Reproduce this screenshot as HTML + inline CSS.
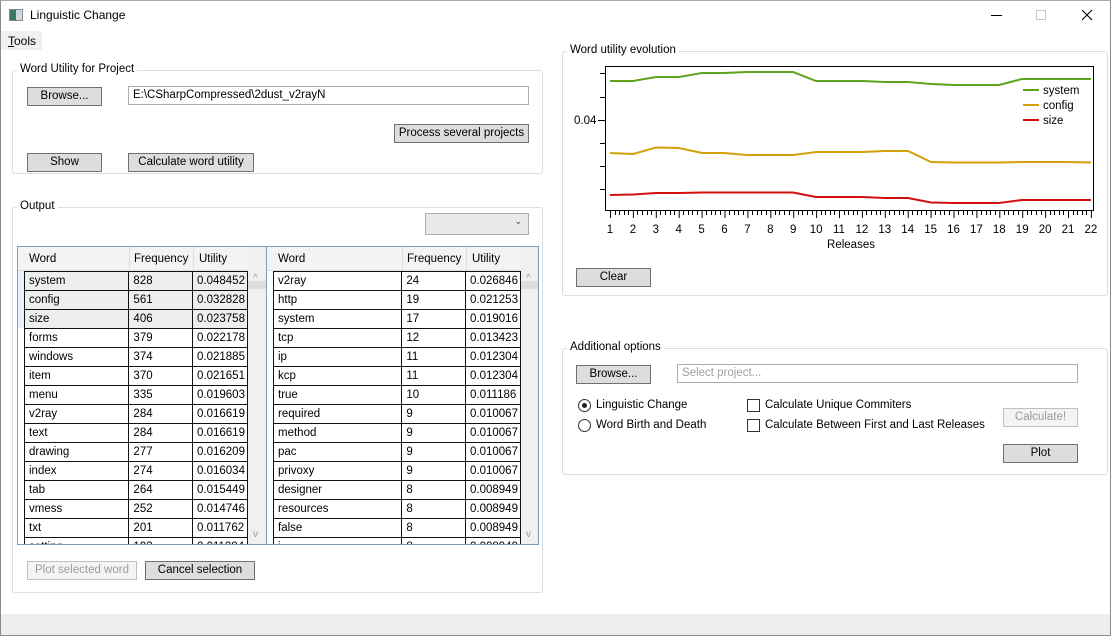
<!DOCTYPE html>
<html><head><meta charset="utf-8"><style>
*{box-sizing:border-box;margin:0;padding:0}
body{width:1111px;height:636px;overflow:hidden;background:#fff;font-family:"Liberation Sans",sans-serif;font-size:11.5px;color:#000;position:relative}
.a{position:absolute}
.btn{position:absolute;background:#dddddd;border:1px solid #707070;text-align:center;line-height:17px;font-size:11.5px}
.dis{color:#9a9a9a;border-color:#bfbfbf;background:#f4f4f4}
.grp{position:absolute;border:1px solid #d5dfe5;border-radius:3px}
.gt{position:absolute;background:#fff;padding:0 3px;top:-8px;left:4px;font-size:11.5px}
.tb{position:absolute;border:1px solid #abadb3;background:#fff;padding-left:4px;line-height:16px}
table{border-collapse:collapse;position:absolute;font-size:11.5px}
td{border:1px solid #111;height:19px;padding:0 0 0 4px;white-space:nowrap;overflow:hidden}
</style></head><body>
<div class="a" style="left:0;top:0;width:1111px;height:636px;border:1px solid #8a8a8a;border-top-color:#aaa"></div>
<div class="a" style="left:9px;top:9px;width:14px;height:12px;border:1px solid #888;background:linear-gradient(90deg,#3b7a5c 0 50%,#cfd8e0 50%)"></div>
<div class="a" style="left:30px;top:8px;font-size:12px">Linguistic Change</div>
<div class="a" style="left:991px;top:15px;width:11px;height:1px;background:#000"></div>
<div class="a" style="left:1036px;top:10px;width:10px;height:10px;border:1px solid #c8c8c8"></div>
<svg class="a" style="left:1081px;top:9px" width="12" height="12"><path d="M1 1L11 11M11 1L1 11" stroke="#000" stroke-width="1.1"/></svg>
<div class="a" style="left:1px;top:31px;width:41px;height:19px;background:#f0f0f0"></div>
<div class="a" style="left:8px;top:34px;font-size:12px"><u>T</u>ools</div>
<div class="grp" style="left:12px;top:70px;width:531px;height:104px"><div class="gt">Word Utility for Project</div></div>
<div class="btn" style="left:27px;top:87px;width:75px;height:19px">Browse...</div>
<div class="tb" style="left:128px;top:86px;width:401px;height:19px">E:\CSharpCompressed\2dust_v2rayN</div>
<div class="btn" style="left:394px;top:124px;width:135px;height:19px">Process several projects</div>
<div class="btn" style="left:27px;top:153px;width:75px;height:19px">Show</div>
<div class="btn" style="left:128px;top:153px;width:126px;height:19px">Calculate word utility</div>
<div class="grp" style="left:12px;top:207px;width:531px;height:386px"><div class="gt">Output</div></div>
<div class="a" style="left:425px;top:213px;width:104px;height:22px;border:1px solid #acacac;background:#eaeaea"><span class="a" style="right:6px;top:2px;font-size:9px;color:#444">&#8964;</span></div>
<div class="a" style="left:17px;top:246px;width:522px;height:299px;border:1px solid #7b9ebd;overflow:hidden;background:#fff">
<div class="a" style="left:0;top:0;width:248px;height:24px;background:#f3f3f3;border-bottom:1px solid #ddd"></div>
<div class="a" style="left:11px;top:6px">Word</div><div class="a" style="left:116px;top:6px">Frequency</div><div class="a" style="left:181px;top:6px">Utility</div>
<div class="a" style="left:111px;top:0;width:1px;height:24px;background:#ddd"></div>
<div class="a" style="left:175px;top:0;width:1px;height:24px;background:#ddd"></div>
<div class="a" style="left:230px;top:0;width:18px;height:298px;background:#f0f0f0"></div>
<div class="a" style="left:230px;top:34px;width:18px;height:8px;background:#ddd"></div>
<div class="a" style="left:235px;top:26px;color:#999;font-size:10px">^</div>
<div class="a" style="left:235px;top:282px;color:#999;font-size:10px">v</div>
<div class="a" style="left:248px;top:0;width:1px;height:298px;background:#7b9ebd"></div>
<div class="a" style="left:249px;top:0;width:272px;height:24px;background:#f3f3f3;border-bottom:1px solid #ddd"></div>
<div class="a" style="left:260px;top:6px">Word</div><div class="a" style="left:389px;top:6px">Frequency</div><div class="a" style="left:454px;top:6px">Utility</div>
<div class="a" style="left:384px;top:0;width:1px;height:24px;background:#ddd"></div>
<div class="a" style="left:448px;top:0;width:1px;height:24px;background:#ddd"></div>
<div class="a" style="left:503px;top:0;width:18px;height:298px;background:#f0f0f0"></div>
<div class="a" style="left:503px;top:34px;width:18px;height:8px;background:#ddd"></div>
<div class="a" style="left:508px;top:26px;color:#999;font-size:10px">^</div>
<div class="a" style="left:508px;top:282px;color:#999;font-size:10px">v</div>
<div class="a" style="left:0;top:24px;width:6px;height:57px;background:#e8f1fa"></div>
<table style="left:6px;top:24px;width:224px">
<colgroup><col style="width:105px"><col style="width:64px"><col style="width:55px"></colgroup>
<tr style="background:#eee"><td>system</td><td>828</td><td>0.048452</td></tr>
<tr style="background:#eee"><td>config</td><td>561</td><td>0.032828</td></tr>
<tr style="background:#eee"><td>size</td><td>406</td><td>0.023758</td></tr>
<tr><td>forms</td><td>379</td><td>0.022178</td></tr>
<tr><td>windows</td><td>374</td><td>0.021885</td></tr>
<tr><td>item</td><td>370</td><td>0.021651</td></tr>
<tr><td>menu</td><td>335</td><td>0.019603</td></tr>
<tr><td>v2ray</td><td>284</td><td>0.016619</td></tr>
<tr><td>text</td><td>284</td><td>0.016619</td></tr>
<tr><td>drawing</td><td>277</td><td>0.016209</td></tr>
<tr><td>index</td><td>274</td><td>0.016034</td></tr>
<tr><td>tab</td><td>264</td><td>0.015449</td></tr>
<tr><td>vmess</td><td>252</td><td>0.014746</td></tr>
<tr><td>txt</td><td>201</td><td>0.011762</td></tr>
<tr><td>setting</td><td>193</td><td>0.011294</td></tr>
</table>
<table style="left:255px;top:24px;width:248px">
<colgroup><col style="width:129px"><col style="width:64px"><col style="width:55px"></colgroup>
<tr><td>v2ray</td><td>24</td><td>0.026846</td></tr>
<tr><td>http</td><td>19</td><td>0.021253</td></tr>
<tr><td>system</td><td>17</td><td>0.019016</td></tr>
<tr><td>tcp</td><td>12</td><td>0.013423</td></tr>
<tr><td>ip</td><td>11</td><td>0.012304</td></tr>
<tr><td>kcp</td><td>11</td><td>0.012304</td></tr>
<tr><td>true</td><td>10</td><td>0.011186</td></tr>
<tr><td>required</td><td>9</td><td>0.010067</td></tr>
<tr><td>method</td><td>9</td><td>0.010067</td></tr>
<tr><td>pac</td><td>9</td><td>0.010067</td></tr>
<tr><td>privoxy</td><td>9</td><td>0.010067</td></tr>
<tr><td>designer</td><td>8</td><td>0.008949</td></tr>
<tr><td>resources</td><td>8</td><td>0.008949</td></tr>
<tr><td>false</td><td>8</td><td>0.008949</td></tr>
<tr><td>i</td><td>8</td><td>0.008949</td></tr>
</table>
</div>
<div class="btn dis" style="left:27px;top:561px;width:110px;height:19px">Plot selected word</div>
<div class="btn" style="left:145px;top:561px;width:110px;height:19px">Cancel selection</div>
<div class="grp" style="left:562px;top:51px;width:546px;height:245px"><div class="gt">Word utility evolution</div></div>
<svg class="a" style="left:0;top:0" width="1111" height="300">
<rect x="605.5" y="66.5" width="488" height="144" fill="none" stroke="#000" stroke-width="1"/>
<g stroke="#000">
<line x1="600" y1="73.5" x2="605" y2="73.5"/><line x1="600" y1="97.5" x2="605" y2="97.5"/><line x1="598" y1="120.5" x2="605" y2="120.5"/>
<line x1="600" y1="143.5" x2="605" y2="143.5"/><line x1="600" y1="166.5" x2="605" y2="166.5"/><line x1="600" y1="189.5" x2="605" y2="189.5"/>
</g>
<g id="ticks" stroke="#000"></g>
<polyline fill="none" stroke="#5ba41c" stroke-width="2" points="610,81 633,81 656,77 679,77 702,73 724,73 747,72 770,72 793,72 816,81 839,81 862,81 885,82 908,82 931,84 954,85 976,85 999,85 1022,79 1045,79 1068,79 1091,79"/>
<polyline fill="none" stroke="#d4a00c" stroke-width="2" points="610,153 633,154 656,147.5 679,148 702,153 724,153 747,155 770,155 793,155 816,152 839,152 862,152 885,151 908,151 931,162 954,162.5 976,162.5 999,162.5 1022,162 1045,162 1068,162 1091,162.5"/>
<polyline fill="none" stroke="#d40f0f" stroke-width="2" points="610,195 633,194.5 656,193 679,193 702,192.5 724,192.5 747,192.5 770,192.5 793,192.5 816,197 839,197 862,197 885,198 908,198 931,202.5 954,203 976,203 999,203 1022,200 1045,200 1068,200 1091,200"/>
<g stroke-width="2"><line x1="1023" y1="90" x2="1039" y2="90" stroke="#5ba41c"/><line x1="1023" y1="105" x2="1039" y2="105" stroke="#d4a00c"/><line x1="1023" y1="120" x2="1039" y2="120" stroke="#d40f0f"/></g>
<g font-family="Liberation Sans" font-size="11.5"><text x="1043" y="94">system</text><text x="1043" y="109">config</text><text x="1043" y="124">size</text>
<text x="574" y="124">0.04</text>
<g text-anchor="middle" id="lbl"></g>
<text x="851" y="248" text-anchor="middle">Releases</text></g>
</svg>
<script>
(function(){var ns="http://www.w3.org/2000/svg",t=document.getElementById("ticks"),l=document.getElementById("lbl");
for(var i=0;i<22;i++){var x=610+i*22.9;var ln=document.createElementNS(ns,"line");ln.setAttribute("x1",x+.5);ln.setAttribute("x2",x+.5);ln.setAttribute("y1",211);ln.setAttribute("y2",218);t.appendChild(ln);
var tx=document.createElementNS(ns,"text");tx.setAttribute("x",x);tx.setAttribute("y",233);tx.textContent=i+1;l.appendChild(tx);
if(i<21)for(var k=1;k<5;k++){var m=document.createElementNS(ns,"line"),mx=Math.round(x+k*4.58)+.5;m.setAttribute("x1",mx);m.setAttribute("x2",mx);m.setAttribute("y1",211);m.setAttribute("y2",215);t.appendChild(m);}}})();
</script>
<div class="btn" style="left:576px;top:268px;width:75px;height:19px">Clear</div>
<div class="grp" style="left:562px;top:348px;width:546px;height:127px"><div class="gt">Additional options</div></div>
<div class="btn" style="left:576px;top:365px;width:75px;height:19px">Browse...</div>
<div class="tb" style="left:677px;top:364px;width:401px;height:19px;color:#a0a0a0">Select project...</div>
<div class="a" style="left:578px;top:399px;width:13px;height:13px;border:1px solid #333;border-radius:50%"><div class="a" style="left:3px;top:3px;width:5px;height:5px;border-radius:50%;background:#222"></div></div>
<div class="a" style="left:596px;top:399px">Linguistic Change</div>
<div class="a" style="left:578px;top:419px;width:13px;height:13px;border:1px solid #333;border-radius:50%"></div>
<div class="a" style="left:596px;top:419px">Word Birth and Death</div>
<div class="a" style="left:747px;top:399px;width:13px;height:13px;border:1px solid #333"></div>
<div class="a" style="left:765px;top:399px">Calculate Unique Commiters</div>
<div class="a" style="left:747px;top:419px;width:13px;height:13px;border:1px solid #333"></div>
<div class="a" style="left:765px;top:419px">Calculate Between First and Last Releases</div>
<div class="btn dis" style="left:1003px;top:408px;width:75px;height:19px">Calculate!</div>
<div class="btn" style="left:1003px;top:444px;width:75px;height:19px">Plot</div>
<div class="a" style="left:1px;top:614px;width:1109px;height:21px;background:#f0eeed"></div>
</body></html>
